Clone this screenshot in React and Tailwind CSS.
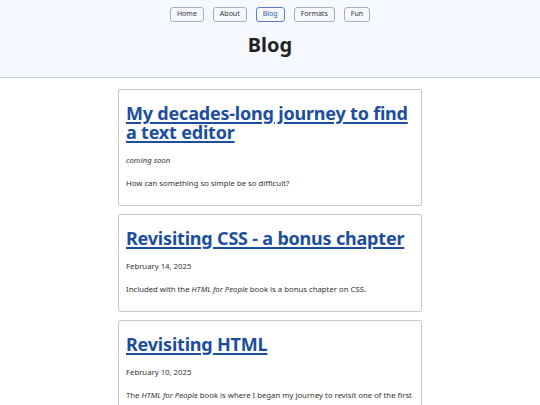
import React from "react";

const font = { fontFamily: '"Noto Sans", "Open Sans", sans-serif' };

function NavBtn({ children, active }) {
  return (
    <a
      className={
        active
          ? "h-[15px] px-[6px] flex items-center rounded-[3px] border border-[#5b7fc7] text-[#2f5aa8] text-[7px] bg-[#f5f8fe]"
          : "h-[15px] px-[6px] flex items-center rounded-[3px] border border-[#a9b0bd] text-[#333] text-[7px] bg-[#f5f8fe]"
      }
    >
      {children}
    </a>
  );
}

function Card({ title, date, italicDate, children }) {
  return (
    <div className="border border-[#c8c8cc] rounded-[2px] bg-white px-[7px] pt-[14px] pb-[16px]">
      <h2 className="text-[18px] leading-[19px] tracking-[-0.2px] font-bold text-[#1d4e9e] underline decoration-[1.5px] underline-offset-[2px]">
        {title}
      </h2>
      <p className={"mt-[13px] text-[7.75px] leading-[11px] text-[#333] " + (italicDate ? "italic" : "")}>{date}</p>
      <p className="mt-[11px] text-[7.75px] leading-[12px] text-[#333]">{children}</p>
    </div>
  );
}

export default function App() {
  return (
    <div style={font} className="w-[540px] h-[405px] overflow-hidden bg-white">
      <header className="bg-[#f5f8fe] border-b border-[#c9cdd4] h-[78px] flex flex-col items-center">
        <nav className="flex gap-[9px] mt-[7px]">
          <NavBtn>Home</NavBtn>
          <NavBtn>About</NavBtn>
          <NavBtn active>Blog</NavBtn>
          <NavBtn>Formats</NavBtn>
          <NavBtn>Fun</NavBtn>
        </nav>
        <h1 className="mt-[11px] text-[20px] leading-[24px] font-bold text-[#222]">Blog</h1>
      </header>
      <main className="w-[304px] mx-auto mt-[11px] flex flex-col gap-[8px]">
        <Card title="My decades-long journey to find a text editor" date="coming soon" italicDate>
          How can something so simple be so difficult?
        </Card>
        <Card title="Revisiting CSS - a bonus chapter" date="February 14, 2025">
          Included with the <em>HTML for People</em> book is a bonus chapter on CSS.
        </Card>
        <Card title="Revisiting HTML" date="February 10, 2025">
          The <em>HTML for People</em> book is where I began my journey to revisit one of the first programming scripting languages I learned.
        </Card>
      </main>
    </div>
  );
}
